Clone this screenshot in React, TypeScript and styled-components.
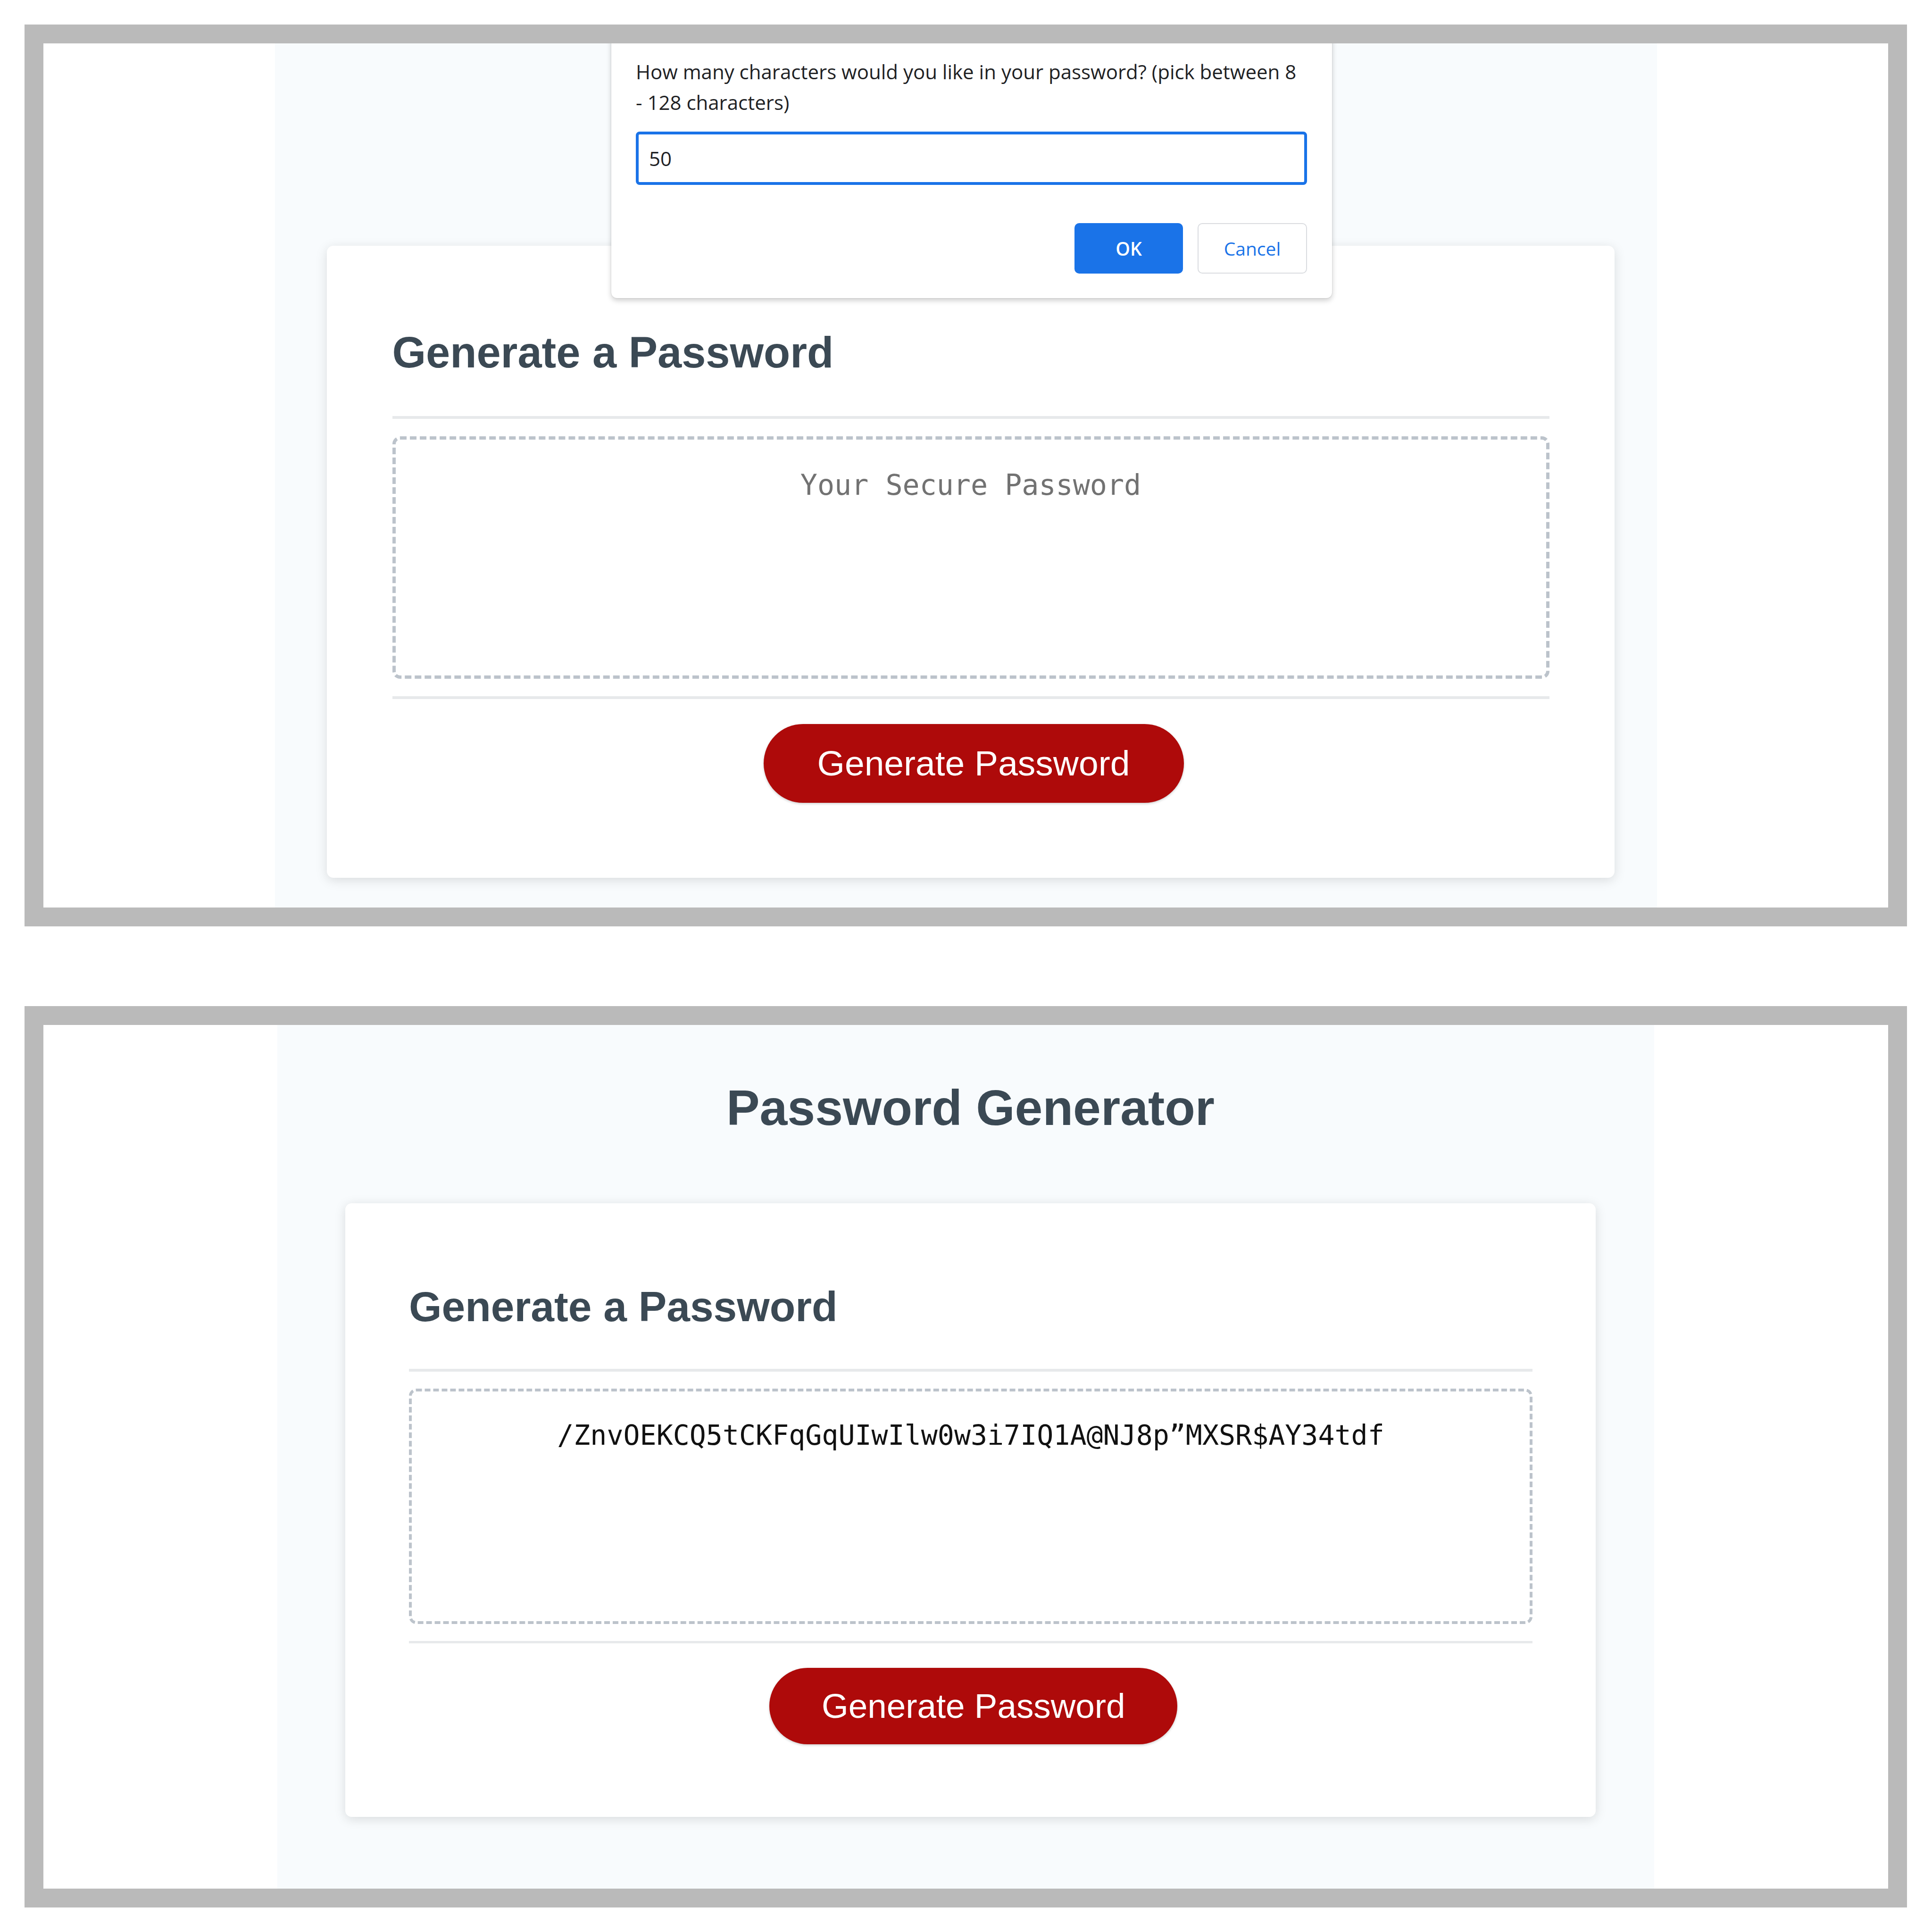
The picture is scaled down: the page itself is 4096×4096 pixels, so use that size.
import styled, { createGlobalStyle } from 'styled-components'

// every size inside a screen is written at the top screen's scale and
// multiplied by --s, so the second (slightly smaller) capture reuses it
const u = (n: number) => `calc(${n}px * var(--s))`

const GlobalStyle = createGlobalStyle`
    html, body {
        margin: 0;
        padding: 0;
        background: #ffffff;
    }

    body {
        width: 4096px;
        min-height: 4096px;
        font-family: "Liberation Sans", Arial, sans-serif;
    }
`

const Sheet = styled.main`
    display: flex;
    flex-direction: column;
    gap: 169px;
    padding: 52px 0 0 52px;
`

const Frame = styled.section<{ $h: number }>`
    position: relative;
    box-sizing: border-box;
    width: 3991px;
    height: ${p => p.$h}px;
    border: 40px solid #bababa;
    background: #ffffff;
    overflow: hidden;
    display: flex;
    justify-content: center;
`

const Page = styled.div<{ $s: number, $w: number, $top: number }>`
    --s: ${p => p.$s};
    box-sizing: border-box;
    width: ${p => p.$w}px;
    height: 100%;
    padding-top: ${p => p.$top}px;
    padding-left: 20px;
    background: #f8fbfd;
    display: flex;
    flex-direction: column;
    align-items: center;
    color: hsl(206, 17%, 28%);
`

const Title = styled.h1`
    margin: 0;
    font-size: ${u(109)};
    line-height: ${u(108)};
    font-weight: 700;
    text-align: center;
`

const Card = styled.div`
    box-sizing: border-box;
    width: ${u(2730)};
    margin-top: ${u(155)};
    padding: ${u(180)} ${u(138)} ${u(159)} ${u(139)};
    background: #ffffff;
    border-radius: ${u(14)};
    box-shadow: 0 ${u(5)} ${u(24)} rgba(0, 0, 0, 0.13);
    display: flex;
    flex-direction: column;
`

const CardTitle = styled.h2`
    margin: 0;
    font-size: ${u(92)};
    line-height: ${u(92)};
    font-weight: 700;
`

const Rule = styled.div<{ $gap: number }>`
    height: ${u(6)};
    margin-top: ${p => u(p.$gap)};
    background: #e7e9eb;
`

const Output = styled.textarea`
    display: block;
    box-sizing: border-box;
    width: 100%;
    height: ${u(514)};
    margin: ${u(37)} 0 0;
    padding: ${u(66)} ${u(40)} 0;
    border: ${u(7)} dashed #bcc3cb;
    border-radius: ${u(16)};
    background: #ffffff;
    color: #111111;
    font-family: "DejaVu Sans Mono", "Liberation Mono", monospace;
    font-size: ${u(60)};
    line-height: ${u(60)};
    text-align: center;
    resize: none;
    overflow: hidden;
    outline: none;

    &::placeholder {
        color: #727272;
    }
`

const Footer = styled.div`
    display: flex;
    justify-content: center;
    padding-top: ${u(53)};
`

const GenerateButton = styled.button`
    width: ${u(891)};
    height: ${u(167)};
    margin-left: ${u(12)};
    border: none;
    border-radius: ${u(84)};
    background: #ae0a0a;
    box-shadow: 0 ${u(2)} ${u(5)} rgba(0, 0, 0, 0.2);
    color: #ffffff;
    font-family: "Liberation Sans", Arial, sans-serif;
    font-size: ${u(75)};
    line-height: ${u(75)};
    cursor: pointer;
`

// chrome's prompt() box, cut by the top edge of the capture
const Prompt = styled.div`
    position: absolute;
    top: -20px;
    left: 1204px;
    box-sizing: border-box;
    width: 1528px;
    padding: 47px 53px 52px 52px;
    background: #ffffff;
    border-radius: 12px;
    box-shadow: 0 5px 12px rgba(0, 0, 0, 0.2), 0 0 2px rgba(0, 0, 0, 0.18);
    font-family: "Open Sans", "Noto Sans", sans-serif;
    color: #202124;
`

const PromptText = styled.p`
    margin: 0;
    font-size: 42px;
    line-height: 65px;
`

const PromptInput = styled.input`
    display: block;
    box-sizing: border-box;
    width: 100%;
    height: 113px;
    margin-top: 30px;
    padding: 0 22px;
    border: 6px solid #1a73e8;
    border-radius: 8px;
    font-family: "Open Sans", "Noto Sans", sans-serif;
    font-size: 42px;
    color: #202124;
    outline: none;
`

const PromptActions = styled.div`
    display: flex;
    justify-content: flex-end;
    gap: 31px;
    margin-top: 81px;
`

const PromptButton = styled.button<{ $primary?: boolean }>`
    box-sizing: border-box;
    width: ${p => p.$primary ? 230 : 232}px;
    height: 107px;
    border: ${p => p.$primary ? 'none' : '2px solid #dadce0'};
    border-radius: 10px;
    background: ${p => p.$primary ? '#1a73e8' : '#ffffff'};
    color: ${p => p.$primary ? '#ffffff' : '#1a73e8'};
    font-family: "Open Sans", "Noto Sans", sans-serif;
    font-size: 39px;
    font-weight: ${p => p.$primary ? 600 : 500};
    cursor: pointer;
`

const PasswordCard = ({ password }: { password?: string }) => (
    <Card>
        <CardTitle>
            Generate a Password
        </CardTitle>

        <Rule $gap={89} />

        <Output
            placeholder="Your Secure Password"
            readOnly
            value={password ?? ''}
        />

        <Rule $gap={37} />

        <Footer>
            <GenerateButton type="button">
                Generate Password
            </GenerateButton>
        </Footer>
    </Card>
)

const App = () => (
    <>
        <GlobalStyle />

        <Sheet>
            <Frame $h={1912}>
                <Page $s={1} $top={166} $w={2930}>
                    <Title>
                        Password Generator
                    </Title>

                    <PasswordCard />
                </Page>

                <Prompt>
                    <PromptText>
                        How many characters would you like in your password? (pick between 8
                        <br />
                        - 128 characters)
                    </PromptText>

                    <PromptInput defaultValue="50" />

                    <PromptActions>
                        <PromptButton $primary type="button">
                            OK
                        </PromptButton>

                        <PromptButton type="button">
                            Cancel
                        </PromptButton>
                    </PromptActions>
                </Prompt>
            </Frame>

            <Frame $h={1911}>
                <Page $s={0.971} $top={123} $w={2919}>
                    <Title>
                        Password Generator
                    </Title>

                    <PasswordCard password="/ZnvOEKCQ5tCKFqGqUIwIlw0w3i7IQ1A@NJ8p”MXSR$AY34tdf" />
                </Page>
            </Frame>
        </Sheet>
    </>
)

export default App
